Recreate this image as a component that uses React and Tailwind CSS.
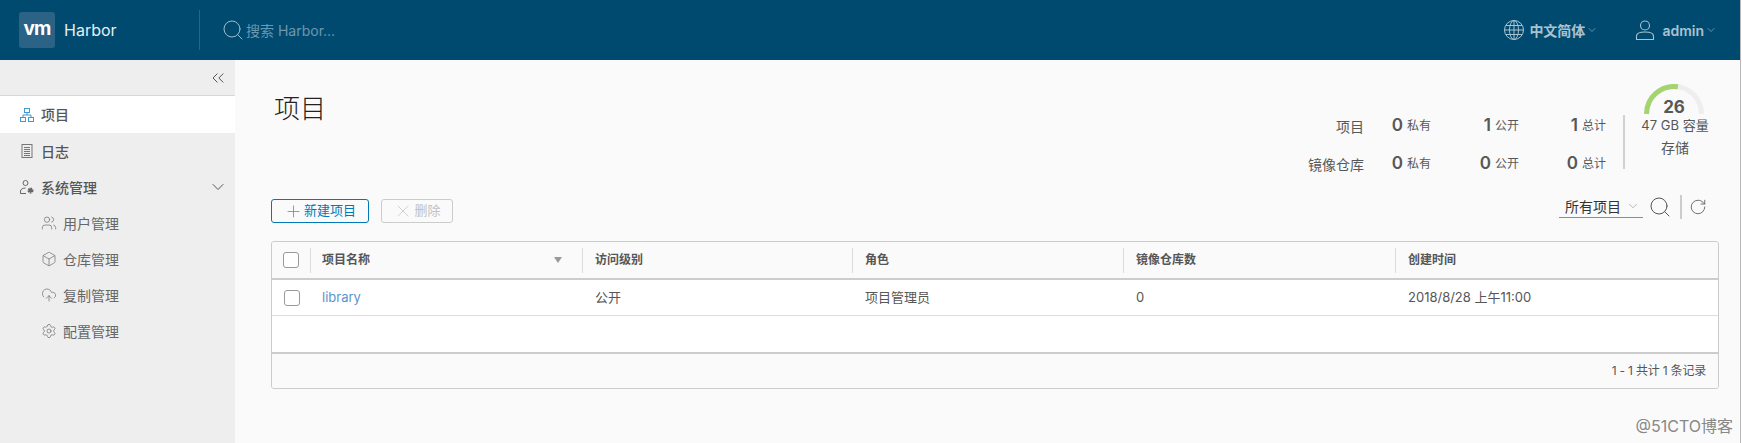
import React from "react";
import { Search, ChevronDown, ChevronsLeft, Plus, X, RotateCw, Users, Box, Settings, CloudUpload } from "lucide-react";

const subItems = [
  { label: "用户管理", icon: Users },
  { label: "仓库管理", icon: Box },
  { label: "复制管理", icon: CloudUpload },
  { label: "配置管理", icon: Settings },
];

const stats = [
  { label: "项目", nums: ["0", "1", "1"] },
  { label: "镜像仓库", nums: ["0", "0", "0"] },
];
const statNames = ["私有", "公开", "总计"];

const columns = [
  { label: "访问级别", w: "w-[270px]" },
  { label: "角色", w: "w-[271px]" },
  { label: "镜像仓库数", w: "w-[272px]" },
  { label: "创建时间", w: "flex-1" },
];

const ProjectsIcon = () => (
  <svg width="14" height="14" viewBox="0 0 14 14" fill="none" stroke="#3d9bd0" strokeWidth="1">
    <rect x="4.5" y="0.5" width="5" height="4" />
    <rect x="0.5" y="9.5" width="5" height="4" />
    <rect x="8.5" y="9.5" width="5" height="4" />
    <path d="M7 4.5V7M3 9.5V7H11V9.5" />
  </svg>
);

const LogsIcon = () => (
  <svg width="14" height="14" viewBox="0 0 14 14" fill="none" stroke="#777777" strokeWidth="1">
    <rect x="2" y="0.5" width="10" height="13" />
    <path d="M4 3.5H10M4 5.5H10M4 7.5H10M4 9.5H10M4 11.5H10" />
  </svg>
);

const AdminIcon = () => (
  <svg width="14" height="14" viewBox="0 0 14 14" fill="none" stroke="#666666" strokeWidth="1">
    <circle cx="5.5" cy="3" r="2.5" />
    <path d="M0.5 13.5V11C0.5 9.2 3 8 5.5 8" />
    <path d="M0.5 13.5H6" />
    <circle cx="10.5" cy="10.5" r="2" fill="#666666" strokeWidth="2" strokeDasharray="1.4 0.7" />
  </svg>
);

const GlobeIcon = () => (
  <svg width="20" height="20" viewBox="0 0 20 20" fill="none" stroke="#a9c2cf" strokeWidth="1">
    <circle cx="10" cy="10" r="9.5" />
    <ellipse cx="10" cy="10" rx="4.5" ry="9.5" />
    <path d="M10 0.5V19.5M0.5 10H19.5M2 5.5H18M2 14.5H18" />
  </svg>
);

const UserIcon = () => (
  <svg width="20" height="20" viewBox="0 0 20 20" fill="none" stroke="#a9c2cf" strokeWidth="1.1">
    <circle cx="10" cy="5.5" r="4.5" />
    <path d="M1.5 19.5V16C1.5 13.5 5 12 10 12C15 12 18.5 13.5 18.5 16V19.5Z" />
  </svg>
);

const Checkbox = () => <span className="block w-4 h-4 rounded-[3px] border border-[#9a9a9a] bg-white" />;

const Header = () => (
  <header className="h-[60px] bg-[#004a70] flex items-center text-white">
    <div className="w-[200px] flex items-center pl-[19px] h-[40px] border-r border-[#2a6584]">
      <div className="w-9 h-9 rounded-[3px] bg-[#2a6385] flex items-center justify-center">
        <span className="text-[19px] font-bold leading-none tracking-tighter pb-[3px]">vm</span>
      </div>
      <span className="ml-[9px] text-[16px] text-[#e6eef2]">Harbor</span>
    </div>
    <div className="flex items-center ml-[21px] text-[#6d97ae]">
      <Search size={24} strokeWidth={1} className="text-[#a0bccb]" />
      <span className="ml-[1px] text-[14px]">搜索 Harbor...</span>
    </div>
    <div className="ml-auto flex items-center text-[#a9c2cf] text-[14px] font-semibold">
      <GlobeIcon />
      <span className="ml-[5px]">中文简体</span>
      <ChevronDown size={12} strokeWidth={1.2} className="ml-[1px]" />
      <span className="ml-[37px]">
        <UserIcon />
      </span>
      <span className="ml-[7px]">admin</span>
      <ChevronDown size={12} strokeWidth={1.2} className="ml-[1px] mr-[23px]" />
    </div>
  </header>
);

const Sidebar = () => (
  <aside className="w-[235px] bg-[#eeeeee] text-[14px] font-medium text-[#565656]">
    <div className="h-[36px] flex items-center justify-end pr-[7px] border-b border-[#d7d7d7]">
      <ChevronsLeft size={20} strokeWidth={1.1} className="text-[#444444]" />
    </div>
    <div className="h-[37px] bg-white flex items-center pl-5 gap-[7px]">
      <ProjectsIcon />
      项目
    </div>
    <div className="h-9 flex items-center pl-5 gap-[7px]">
      <LogsIcon />
      日志
    </div>
    <div className="h-9 flex items-center pl-5 gap-[7px]">
      <AdminIcon />
      系统管理
      <ChevronDown size={20} strokeWidth={1.2} className="ml-auto mr-[7px] text-[#555555]" />
    </div>
    {subItems.map((item) => (
      <div key={item.label} className="h-9 flex items-center pl-[41px] gap-[6px] font-normal text-[#666666]">
        <item.icon size={16} strokeWidth={1} />
        {item.label}
      </div>
    ))}
  </aside>
);

const Stats = () => (
  <div className="w-[306px] h-[56px] mt-[57px] flex flex-col justify-between text-[#575757]">
    {stats.map((row) => (
      <div key={row.label} className="flex items-center h-[18px]">
        <span className="w-[64px] text-right text-[14px]">{row.label}</span>
        {row.nums.map((n, i) => (
          <div key={i} className={`flex items-center justify-end ${i === 0 ? "w-[67px]" : i === 1 ? "w-[88px]" : "w-[87px]"}`}>
            <span className="text-[17px] font-semibold mr-[4px]">{n}</span>
            <span className="text-[12px]">{statNames[i]}</span>
          </div>
        ))}
      </div>
    ))}
  </div>
);

const Capacity = () => (
  <div className="ml-[17px] border-l-2 border-[#d0d0d0] h-[54px] w-[102px] relative mt-[55px] pt-[1px] text-[13px] text-[#575757] text-center">
    <svg width="60" height="31" viewBox="0 0 60 31" className="absolute left-[19px] -top-[31px]">
      <path d="M2.5 30 A27.5 27.5 0 0 1 57.5 30" fill="none" stroke="#eeeeee" strokeWidth="5" />
      <path d="M2.5 30 A27.5 27.5 0 0 1 34 2.8" fill="none" stroke="#a5d46f" strokeWidth="5" />
    </svg>
    <div className="absolute left-[19px] w-[60px] -top-[16px] text-[17px] font-bold leading-[17px]">26</div>
    <div className="whitespace-nowrap leading-[18px]">47 GB 容量</div>
    <div className="mt-[5px] leading-[18px] text-[14px]">存储</div>
  </div>
);

export default function App() {
  return (
    <div className="relative w-[1742px] h-[443px] overflow-hidden flex bg-[#fafafa] font-['Inter','Noto_Sans_CJK_SC',sans-serif]">
      <div className="w-[1740px]">
        <Header />
        <div className="flex h-[383px]">
          <Sidebar />
          <main className="flex-1 pl-9 pr-[21px] flex flex-col">
            <div className="flex justify-between h-[139px]">
              <h1 className="pt-[31px] pl-[3px] text-[26px] leading-[36px] font-light text-[#222222]">项目</h1>
              <div className="flex mr-[-6px]">
                <Stats />
                <Capacity />
              </div>
            </div>
            <div className="flex items-start h-[24px]">
              <button className="h-[24px] w-[98px] rounded-[3px] border border-[#0079b8] text-[#0079b8] text-[13px] flex items-center justify-center gap-0">
                <Plus size={19} strokeWidth={1.1} className="text-[#4a9fcc]" />
                <span className="ml-[1px]">新建项目</span>
              </button>
              <button className="ml-3 h-[24px] w-[72px] rounded-[3px] border border-[#cccccc] text-[#c2c2c2] text-[13px] flex items-center justify-center">
                <X size={20} strokeWidth={0.9} />
                <span className="ml-[1px]">删除</span>
              </button>
              <div className="ml-auto flex items-center h-[24px] mr-[12px] -mt-[4px]">
                <div className="w-[84px] h-[23px] self-start border-b border-[#8c8c8c] flex items-center pl-[6px] text-[14px] text-[#333333]">
                  所有项目
                  <ChevronDown size={14} strokeWidth={1} className="ml-[5px] text-[#888888]" />
                </div>
                <Search size={24} strokeWidth={1} className="ml-[5px] text-[#555555]" />
                <span className="ml-[8px] h-[24px] border-l-2 border-[#cccccc]" />
                <RotateCw size={18} strokeWidth={1.1} className="ml-[7px] text-[#555555]" />
              </div>
            </div>
            <div className="mt-[18px] h-[148px] rounded-[3px] border border-[#cccccc] text-[13px] text-[#565656] overflow-hidden">
              <div className="h-[38px] flex items-center border-b-2 border-[#cccccc] bg-[#fafafa] text-[12px] font-semibold">
                <div className="w-[39px] h-[25px] flex items-center justify-center border-r border-[#dddddd]">
                  <Checkbox />
                </div>
                <div className="w-[272px] h-[25px] pl-[11px] pr-[20px] flex items-center justify-between border-r border-[#dddddd]">
                  项目名称
                  <span className="w-0 h-0 border-x-[4px] border-t-[6px] border-x-transparent border-t-[#999999]" />
                </div>
                {columns.map((c) => (
                  <div key={c.label} className={`${c.w} h-[25px] pl-3 flex items-center border-r border-[#dddddd] last:border-r-0`}>
                    {c.label}
                  </div>
                ))}
              </div>
              <div className="h-[36px] flex items-center bg-white border-b border-[#dddddd]">
                <div className="w-[39px] flex justify-center">
                  <Checkbox />
                </div>
                <div className="w-[272px] pl-[11px] text-[#5b93c9]">library</div>
                <div className="w-[270px] pl-3">公开</div>
                <div className="w-[271px] pl-3">项目管理员</div>
                <div className="w-[272px] pl-3">0</div>
                <div className="pl-3">2018/8/28 上午11:00</div>
              </div>
              <div className="h-[38px] bg-white border-b-2 border-[#cccccc]" />
              <div className="h-[34px] bg-[#fafafa] flex items-center justify-end pr-3 text-[12px] tracking-[-0.2px]">1 - 1 共计 1 条记录</div>
            </div>
          </main>
        </div>
      </div>
      <div className="w-[2px] border-l border-[#b8b8b8] bg-white" />
      <div className="absolute right-[9px] top-[414px] text-[16px] text-[#888888]">@51CTO博客</div>
    </div>
  );
}
